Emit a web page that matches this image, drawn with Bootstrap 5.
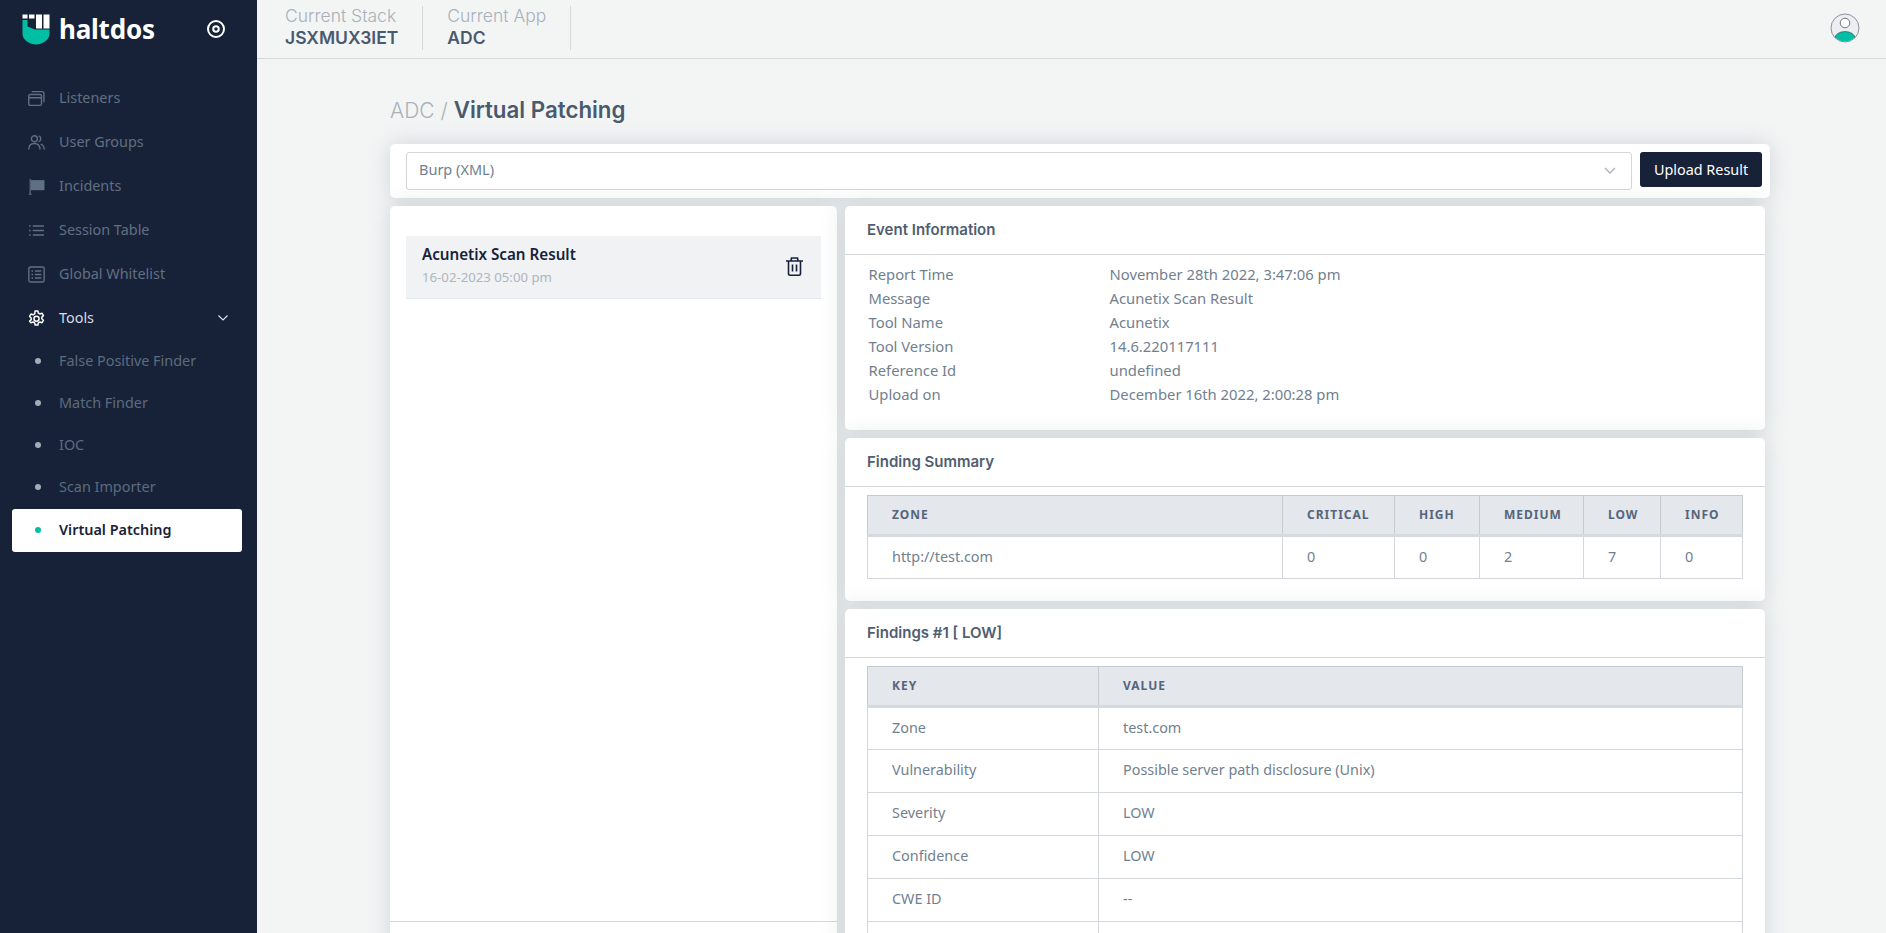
<!DOCTYPE html>
<html lang="en">
<head>
<meta charset="utf-8">
<title>Virtual Patching</title>
<link href="https://cdn.jsdelivr.net/npm/bootstrap@5.3.0/dist/css/bootstrap.min.css" rel="stylesheet">
<style>
html,body{height:100%;overflow:hidden}
body{background:#f3f5f5;font-family:"Noto Sans","Liberation Sans",sans-serif;font-size:14.8px;color:#717f90}
.shell{height:933px}
.side{width:257px;flex:0 0 257px;background:#172239;color:#5d6b7e}
.brand{height:58px;padding:0 31px 0 22px}
.brand-name{font-size:26px;font-weight:700;color:#fff;margin-left:9px;letter-spacing:-.2px;line-height:1}
.side-list{margin-top:18px;list-style:none;padding:0;margin-bottom:0}
.side-item{height:44px;padding-left:28px;color:#616f82;font-size:14.4px}
.side-item svg{width:17px;height:17px;margin-right:14px;flex:none}
.side-item.open{color:#d8dce2;padding-right:29px}
.side-item svg.chev{width:10px;height:6px;margin-right:0;margin-left:auto}
.side-sub{height:42px;padding-left:35px;font-size:14.4px;color:#5d6b7e}
.side-sub i{width:6px;height:6px;border-radius:50%;background:#a3abb7;margin-right:18px;flex:none}
.side-sub.on{background:#fff;color:#172239;font-weight:600;border-radius:3px;margin:1px 15px 0 12px;padding:0 0 2px 23px;height:43px}
.side-sub.on i{background:#00bfa5}
.topb{height:59px;border-bottom:1px solid #d6d9dc;padding:6px 26px 8px 0}
.crumb{padding:0 24px 0 28px;border-right:1px solid #d6d9dc;height:44px;font-family:Inter,"Liberation Sans",sans-serif}
.crumb+.crumb{padding-left:24px}
.crumb-t{font-size:17.500px;font-weight:300;color:#a9b0ba;line-height:21px;margin-top:-1px}
.crumb-v{font-size:17.500px;font-weight:600;color:#4a5a6e;line-height:23px}
.avatar{margin-top:7px}
.wrap{width:1380px;margin-left:133px}
.ttl{font-family:Inter,"Liberation Sans",sans-serif;font-size:21px;line-height:26px;margin:0;padding:38px 0 20px;font-weight:300;color:#aab1bb}
.ttl b{font-weight:600;color:#4a5a6e;font-size:22.300px}
.pane{background:#fff;border-radius:5px;box-shadow:0 0 22px rgba(120,130,145,.28)}
.bar{height:54px;padding:8px 8px 8px 16px;margin-bottom:8px}
.sel{height:38px;border:1px solid #d3d6da;border-radius:3px;color:#717f90;font-size:14.500px;padding:0 15px 2px 12px}
.up{width:122px;height:35px;background:#172239;color:#fff;border:0;border-radius:3px;font-size:14.400px;padding:0;margin-left:8px;flex:none}
.up:hover{background:#172239;color:#fff}
.cols{gap:8px}
.left{width:447px;flex:none;height:761px;padding-top:30px}
.left-foot{border-top:1px solid #d6d9dc;height:46px}
.scan{height:63px;margin:0 16px;background:#f0f2f4;border-bottom:1px solid #e2e8f0;padding:0 18px 4px 16px}
.scan-n{font-size:15.200px;font-weight:600;color:#172239;line-height:20px}
.scan-d{font-size:13.200px;color:#aeb6c0;line-height:20px;margin-top:3px}
.bin{margin-top:3px}
.right{width:920px;flex:none}
.right .pane{margin-bottom:8px}
.hdr{height:49px;padding:0 22px;border-bottom:1px solid #d6d9dc;font-family:Inter,"Liberation Sans",sans-serif;font-size:15px;font-weight:600;color:#4f5e72}
.evt{padding:7px 24px 24px 23.500px;line-height:24px;color:#717f90}
.evt-k{width:241px;flex:none}
.tbl{width:876px;margin:0;table-layout:fixed;border-collapse:collapse;font-size:14.400px}
.tbl th,.tbl td{border:1px solid #d3d6db;vertical-align:middle;padding:0 0 0 24px;background:#fff;color:#717f90;box-shadow:none}
.tbl th{background:#e4e7ec;border-color:#c6cbd3;border-bottom:3px solid #d6d9de;height:40px;font-size:12px;font-weight:700;letter-spacing:1px;color:#56657a;text-transform:uppercase}
.tbl td{height:43px;padding-bottom:2px}
.s1{padding:8px 22px 22px}
.s2{padding:8px 22px 0}
.w1{width:415px}.w2{width:112px}.w3{width:85px}.w4{width:104px}.w5{width:77px}.wk{width:231px}
</style>
</head>
<body>
<div class="d-flex shell">
<aside class="side">
  <div class="brand d-flex align-items-center">
    <svg width="28" height="31" viewBox="0 0 28 31" class="flex-none"><path d="M.5 6H5.500V12.500L13 15.500H27.500V20C27.500 26 20 30.500 14 30.500 8 30.500 .5 26 .5 20Z" fill="#00bfa5"/><path d="M.5 .5h5v4h-5zM7 .5h5.500v4H7zM14 .5h6v14h-6zM21.500 .5h6v14h-6z" fill="#fff"/></svg>
    <span class="brand-name">haltdos</span>
    <svg class="ms-auto" width="20" height="20" viewBox="0 0 20 20" fill="none" stroke="#fff" stroke-width="2"><circle cx="10" cy="10" r="8"/><circle cx="10" cy="10" r="2.800"/></svg>
  </div>
  <ul class="side-list">
    <li class="side-item d-flex align-items-center"><svg viewBox="0 0 16 16" fill="none" stroke="currentColor" stroke-width="1.300"><rect x=".7" y="4.200" width="12" height="10.300" rx="1.500"/><path d="M.7 7.300h12M3.500 1.500h9.500a2 2 0 0 1 2 2v8"/></svg>Listeners</li>
    <li class="side-item d-flex align-items-center"><svg viewBox="0 0 16 16" fill="none" stroke="currentColor" stroke-width="1.300"><circle cx="6" cy="4.500" r="2.800"/><path d="M.7 14.500c0-3.500 2.200-5.500 5.300-5.500s5.300 2 5.300 5.500M10 1.800a2.800 2.800 0 0 1 0 5.400M12 9.500c2 .7 3.300 2.500 3.300 5"/></svg>User Groups</li>
    <li class="side-item d-flex align-items-center"><svg viewBox="0 0 16 16" fill="currentColor"><path d="M1.500 .8h1.100v14h.9v1H.6v-1h.9z"/><path d="M2.600 2H15.500v9.500H2.600z"/></svg>Incidents</li>
    <li class="side-item d-flex align-items-center"><svg viewBox="0 0 16 16" fill="currentColor"><path d="M4.500 3h10.500v1.400H4.500zM4.500 7.300h10.500v1.400H4.500zM4.500 11.600h10.500V13H4.500zM1 3h1.500v1.400H1zM1 7.300h1.500v1.400H1zM1 11.600h1.500V13H1z"/></svg>Session Table</li>
    <li class="side-item d-flex align-items-center"><svg viewBox="0 0 16 16" fill="none" stroke="currentColor" stroke-width="1.300"><rect x=".8" y="1" width="14.400" height="14" rx="1.500"/><path d="M6.500 4.700h6M6.500 8h6M6.500 11.300h6M3.300 4.700h1.500M3.300 8h1.500M3.300 11.300h1.500"/></svg>Global Whitelist</li>
    <li class="side-item open d-flex align-items-center"><svg viewBox="0 0 16 16" fill="none" stroke="#fff" stroke-width="1.400" stroke-linejoin="round"><path d="M6.700 .9h2.600l.4 2 1.500.8 2-.7 1.300 2.300-1.500 1.400v1.600l1.500 1.400-1.300 2.300-2-.7-1.500.8-.4 2H6.700l-.4-2-1.500-.8-2 .7L1.500 10.500 3 9.100V7.500L1.500 6.100 2.800 3.800l2 .7 1.500-.8z"/><circle cx="8" cy="8.200" r="2.400"/></svg>Tools<svg class="chev" viewBox="0 0 10 6" fill="none" stroke="#e2e5ea" stroke-width="1.100"><path d="M.5.500 5 5 9.500.5"/></svg></li>
    <li class="side-sub d-flex align-items-center"><i></i>False Positive Finder</li>
    <li class="side-sub d-flex align-items-center"><i></i>Match Finder</li>
    <li class="side-sub d-flex align-items-center"><i></i>IOC</li>
    <li class="side-sub d-flex align-items-center"><i></i>Scan Importer</li>
    <li class="side-sub on d-flex align-items-center"><i></i>Virtual Patching</li>
  </ul>
</aside>
<main class="flex-grow-1">
  <div class="topb d-flex align-items-start">
    <div class="crumb"><div class="crumb-t">Current Stack</div><div class="crumb-v">JSXMUX3IET</div></div>
    <div class="crumb"><div class="crumb-t">Current App</div><div class="crumb-v">ADC</div></div>
    <svg class="ms-auto avatar" width="30" height="30" viewBox="0 0 30 30"><defs><clipPath id="av"><circle cx="15" cy="15" r="13.500"/></clipPath></defs><circle cx="15" cy="15" r="14" fill="#eceef1" stroke="#8b93a3" stroke-width="1"/><g clip-path="url(#av)"><ellipse cx="15" cy="25" rx="10" ry="6.500" fill="#00bfa5" stroke="#172239" stroke-width=".5"/></g><circle cx="15" cy="10" r="4.800" fill="#fff" stroke="#6b7284" stroke-width="1"/></svg>
  </div>
  <div class="wrap">
    <h1 class="ttl">ADC / <b>Virtual Patching</b></h1>
    <div class="pane bar d-flex align-items-start">
      <div class="sel flex-grow-1 d-flex align-items-center justify-content-between"><span>Burp (XML)</span><svg width="12" height="7" viewBox="0 0 12 7" fill="none" stroke="#a9b0ba" stroke-width="1.300"><path d="M1 1l5 5 5-5"/></svg></div>
      <button class="btn up" type="button">Upload Result</button>
    </div>
    <div class="d-flex cols align-items-start">
      <div class="pane left d-flex flex-column">
        <div class="scan d-flex align-items-center justify-content-between">
          <div><div class="scan-n">Acunetix Scan Result</div><div class="scan-d">16-02-2023 05:00 pm</div></div>
          <svg class="bin" width="17" height="19" viewBox="0 0 17 19" fill="none" stroke="#172239" stroke-width="1.600"><path d="M0 4h17M5 4l.5-3h6l.5 3M2.500 4v12.500c0 1 .8 1.700 1.700 1.700h8.600c.9 0 1.700-.7 1.700-1.700V4M6.500 7.500v7M10.500 7.500v7"/></svg>
        </div>
        <div class="mt-auto left-foot"></div>
      </div>
      <div class="right">
        <section class="pane">
          <div class="hdr d-flex align-items-center">Event Information</div>
          <div class="evt">
            <div class="d-flex"><div class="evt-k">Report Time</div><div>November 28th 2022, 3:47:06 pm</div></div>
            <div class="d-flex"><div class="evt-k">Message</div><div>Acunetix Scan Result</div></div>
            <div class="d-flex"><div class="evt-k">Tool Name</div><div>Acunetix</div></div>
            <div class="d-flex"><div class="evt-k">Tool Version</div><div>14.6.220117111</div></div>
            <div class="d-flex"><div class="evt-k">Reference Id</div><div>undefined</div></div>
            <div class="d-flex"><div class="evt-k">Upload on</div><div>December 16th 2022, 2:00:28 pm</div></div>
          </div>
        </section>
        <section class="pane">
          <div class="hdr d-flex align-items-center">Finding Summary</div>
          <div class="s1">
            <table class="table tbl">
              <colgroup><col><col class="w2"><col class="w3"><col class="w4"><col class="w5"><col></colgroup>
              <thead><tr><th class="w1">Zone</th><th>Critical</th><th>High</th><th>Medium</th><th>Low</th><th>Info</th></tr></thead>
              <tbody><tr><td>http://test.com</td><td>0</td><td>0</td><td>2</td><td>7</td><td>0</td></tr></tbody>
            </table>
          </div>
        </section>
        <section class="pane">
          <div class="hdr d-flex align-items-center">Findings #1 [ LOW]</div>
          <div class="s2">
            <table class="table tbl">
              <colgroup><col class="wk"><col></colgroup>
              <thead><tr><th>Key</th><th>Value</th></tr></thead>
              <tbody>
                <tr><td>Zone</td><td>test.com</td></tr>
                <tr><td>Vulnerability</td><td>Possible server path disclosure (Unix)</td></tr>
                <tr><td>Severity</td><td>LOW</td></tr>
                <tr><td>Confidence</td><td>LOW</td></tr>
                <tr><td>CWE ID</td><td>--</td></tr>
                <tr><td>&nbsp;</td><td>&nbsp;</td></tr>
              </tbody>
            </table>
          </div>
        </section>
      </div>
    </div>
  </div>
</main>
</div>
<script src="https://cdn.jsdelivr.net/npm/bootstrap@5.3.0/dist/js/bootstrap.bundle.min.js"></script>
</body>
</html>
